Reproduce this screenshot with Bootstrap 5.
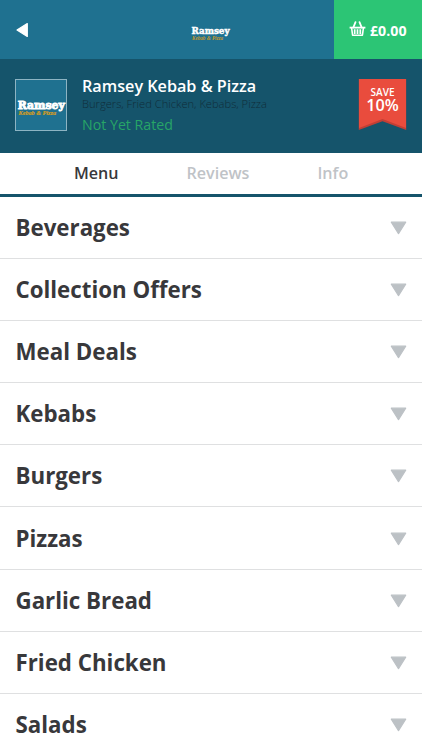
<!DOCTYPE html>
<html lang="en">
<head>
<meta charset="utf-8">
<meta name="viewport" content="width=device-width, initial-scale=1">
<title>Ramsey Kebab &amp; Pizza</title>
<link href="https://cdn.jsdelivr.net/npm/bootstrap@5.3.0/dist/css/bootstrap.min.css" rel="stylesheet">
<style>
body{font-family:"Open Sans","Noto Sans",sans-serif;color:#38383b;height:750px}
.topbar{height:59px;background:#1f7190}
.back-link{padding-left:16px;width:86px}
.brand-logo{width:42px;height:40px;margin-top:1px}
.basket{width:88px;background:#2cc575;font-size:14.2px;font-weight:700;padding-left:15px;gap:4px;padding-top:2px}
.basket svg{margin-top:-4px}
.hero{height:94px;background:#15546b;padding:20px 15px 0}
.shop-logo{width:52px;height:52px;border:1px solid #8db4c3;background:#1f7190}
.shop-text{margin-left:15px;margin-top:-3px}
.shop-name{font-size:16.2px;line-height:20px;font-weight:600;color:#fff}
.shop-tags{font-size:11.15px;line-height:16px;font-weight:300;color:#102d3a}
.shop-rating{font-size:14.2px;line-height:25px;color:#27a567}
.tabs{height:44px;padding-left:74px;gap:68px;border-bottom:3px solid #15546b;font-size:16.1px;line-height:40px;font-weight:600}
.tabs .nav-link{padding:0;color:#bfc3c7}
.tabs .nav-link.active{color:#38383b}
.menu-row{height:62.1px;padding:0 15px 0 15.5px!important;border-color:#dfe0e1!important;color:#38383b;font-size:22.3px;font-weight:700;line-height:61px}
.menu-row svg{margin-top:1px}
</style>
<script src="https://cdn.jsdelivr.net/npm/bootstrap@5.3.0/dist/js/bootstrap.bundle.min.js"></script>
</head>
<body class="bg-white overflow-hidden">
<header class="topbar d-flex justify-content-between">
  <a href="#" class="back-link d-flex align-items-center" aria-label="Back"><svg width="13" height="16" viewBox="0 0 13 15"><path d="M11.3 1.1V13.9L1 7.5Z" fill="#fff" stroke="#fff" stroke-width="1.2" stroke-linejoin="round"/></svg></a>
  <svg class="brand-logo align-self-center" viewBox="0 0 42 40"><text x="2.5" y="24" font-family="DejaVu Serif" font-weight="700" font-size="9.8" textLength="38" lengthAdjust="spacingAndGlyphs" fill="#fff" stroke="#fff" stroke-width=".5">Ramsey</text><text x="3" y="29.5" font-family="Liberation Serif" font-style="italic" font-weight="700" font-size="6.5" textLength="31" lengthAdjust="spacingAndGlyphs" fill="#c6982b">Kebab &amp; Pizza</text></svg>
  <a href="#" class="basket d-flex align-items-center text-white text-decoration-none">
    <svg width="17" height="16" viewBox="0 0 17 16" fill="none" stroke="#fff"><path d="M4.4 6.4 6.5 1.2M12.6 6.4 10.5 1.2" stroke-width="1.8" stroke-linecap="round"/><path d="M.6 6.6H16.4" stroke-width="1.8"/><path d="M2.6 7 3.6 14.2H13.4L14.4 7" stroke-width="1.6" stroke-linejoin="round"/><path d="M5.7 8.2V13M8.5 8.2V13M11.3 8.2V13" stroke-width="1.7"/></svg>
    <span>£0.00</span>
  </a>
</header>
<section class="hero d-flex">
  <svg class="shop-logo flex-shrink-0" viewBox="0 0 50 50"><text x="1.8" y="28.8" font-family="DejaVu Serif" font-weight="700" font-size="11.2" textLength="47" lengthAdjust="spacingAndGlyphs" fill="#fff" stroke="#fff" stroke-width=".9">Ramsey</text><text x="2.5" y="34.5" font-family="Liberation Serif" font-style="italic" font-weight="700" font-size="7" textLength="37.5" lengthAdjust="spacingAndGlyphs" fill="#d39d22" stroke="#d39d22" stroke-width=".2">Kebab &amp; Pizza</text></svg>
  <div class="shop-text flex-grow-1 text-nowrap">
    <h1 class="shop-name m-0">Ramsey Kebab &amp; Pizza</h1>
    <div class="shop-tags">Burgers, Fried Chicken, Kebabs, Pizza</div>
    <div class="shop-rating">Not Yet Rated</div>
  </div>
  <svg width="49" height="52" viewBox="0 0 49 52" class="flex-shrink-0" font-family="Open Sans" fill="#fff" text-anchor="middle"><path d="M.8 0H48.2V51L24.5 42.3.8 51Z" fill="#c23f35"/><path d="M1 0H48V49L24.5 40 1 49Z" fill="#e94c3d"/><text x="24.5" y="17.4" font-size="10" font-weight="600" textLength="24" lengthAdjust="spacingAndGlyphs">SAVE</text><text x="24.5" y="32" font-size="16" font-weight="600" textLength="32.5" lengthAdjust="spacingAndGlyphs">10%</text></svg>
</section>
<nav class="tabs nav d-flex">
  <a class="nav-link active" href="#">Menu</a>
  <a class="nav-link" href="#">Reviews</a>
  <a class="nav-link" href="#">Info</a>
</nav>
<main class="list-group list-group-flush" id="menu"></main>
<script>
document.getElementById('menu').innerHTML=['Beverages','Collection Offers','Meal Deals','Kebabs','Burgers','Pizzas','Garlic Bread','Fried Chicken','Salads'].map(n=>`<a href="#" class="menu-row list-group-item d-flex justify-content-between align-items-center flex-shrink-0"><span>${n}</span><svg width="17" height="14" viewBox="0 0 17 14"><path d="M1.3 1.2H15.7L8.5 12.6Z" fill="#bcc1c5" stroke="#bcc1c5" stroke-width="1.2" stroke-linejoin="round"/></svg></a>`).join('');
</script>
</body>
</html>
